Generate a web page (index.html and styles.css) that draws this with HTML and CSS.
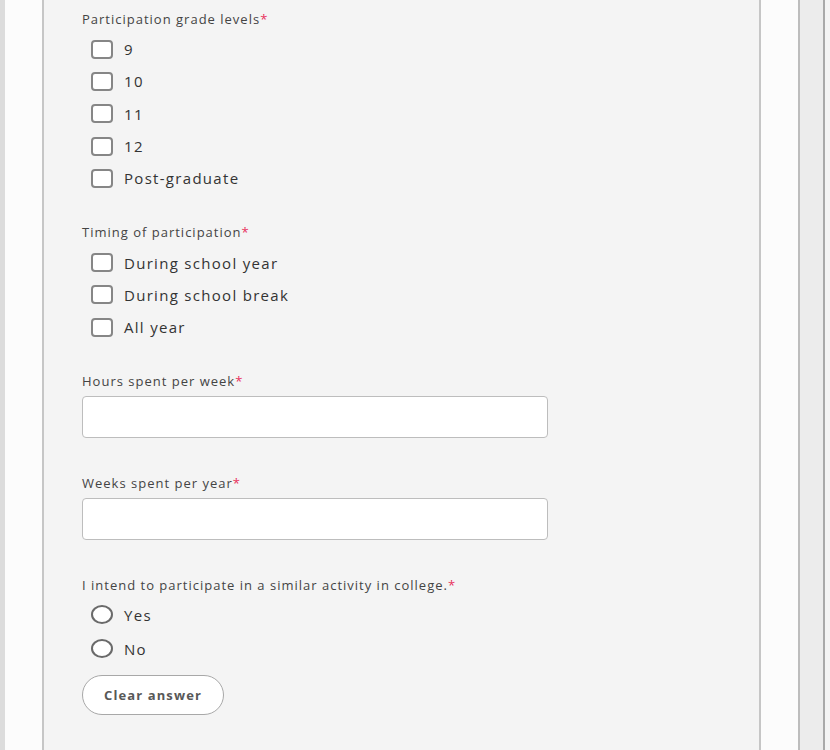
FILE: index.html
```html
<!DOCTYPE html>
<html lang="en">
<head>
  <meta charset="UTF-8" />
  <meta name="viewport" content="width=device-width, initial-scale=1.0"/>
  <title>Activity Details</title>
  <link rel="stylesheet" href="styles.css">
</head>
<body>
  <div class="frame">
    <div class="edge"></div>
    <div class="gutter"></div>

    <div class="panel">
      <fieldset class="group">
        <legend class="field-label">Participation grade levels<span class="req">*</span></legend>
        <label class="option"><input type="checkbox" class="box"><span>9</span></label>
        <label class="option"><input type="checkbox" class="box"><span>10</span></label>
        <label class="option"><input type="checkbox" class="box"><span>11</span></label>
        <label class="option"><input type="checkbox" class="box"><span>12</span></label>
        <label class="option"><input type="checkbox" class="box"><span>Post-graduate</span></label>
      </fieldset>

      <fieldset class="group">
        <legend class="field-label">Timing of participation<span class="req">*</span></legend>
        <label class="option"><input type="checkbox" class="box"><span>During school year</span></label>
        <label class="option"><input type="checkbox" class="box"><span>During school break</span></label>
        <label class="option"><input type="checkbox" class="box"><span>All year</span></label>
      </fieldset>

      <div class="text-field">
        <label class="field-label" for="hours">Hours spent per week<span class="req">*</span></label>
        <input type="text" id="hours" class="text-input">
      </div>

      <div class="text-field">
        <label class="field-label" for="weeks">Weeks spent per year<span class="req">*</span></label>
        <input type="text" id="weeks" class="text-input">
      </div>

      <fieldset class="group radios">
        <legend class="field-label">I intend to participate in a similar activity in college.<span class="req">*</span></legend>
        <label class="option"><input type="radio" name="college" class="round"><span>Yes</span></label>
        <label class="option"><input type="radio" name="college" class="round"><span>No</span></label>
        <button type="button" class="clear-btn">Clear answer</button>
      </fieldset>
    </div>

    <div class="side"></div>
    <div class="track"></div>
    <div class="rest"></div>
  </div>
</body>
</html>
```

FILE: styles.css
```css
body {
  margin: 0;
  padding: 0;
  font-family: "Open Sans", Arial, sans-serif;
  color: #333;
  background-color: #f4f4f4;
  overflow: hidden;
}

.frame {
  display: flex;
  height: 750px;
}

.edge {
  width: 5px;
  background-color: #dcdcdc;
}

.gutter {
  width: 37px;
  background-color: #fcfcfc;
}

.panel {
  width: 719px;
  padding: 10px 0 0 38px;
  box-sizing: border-box;
  background-color: #f4f4f4;
  border-left: 2px solid #c6c6c6;
  border-right: 2px solid #c6c6c6;
}

.side {
  width: 37px;
  background-color: #fcfcfc;
  border-right: 2px solid #bdbdbd;
}

.track {
  width: 23px;
  background-color: #ececec;
  border-right: 2px solid #a9a9a9;
}

.rest {
  flex: 1;
  background-color: #f4f4f4;
}

.group {
  border: none;
  margin: 0 0 29px;
  padding: 0;
}

.field-label {
  display: block;
  padding: 0;
  font-size: 13px;
  line-height: 18px;
  letter-spacing: 1px;
  color: #444;
  margin-bottom: 5px;
}

.req {
  color: #e8305c;
}

.option {
  display: flex;
  align-items: center;
  height: 32.3px;
  padding-left: 9px;
  font-size: 15px;
  letter-spacing: 1.3px;
  color: #333;
}

.box,
.round {
  appearance: none;
  margin: 0 11px 0 0;
  width: 22px;
  height: 19px;
  border: 2px solid #868686;
  background-color: #fff;
  box-sizing: border-box;
}

.box {
  border-radius: 4px;
}

.round {
  border-radius: 50%;
  border-color: #6a6a6a;
}

.radios .field-label {
  margin-bottom: 3px;
}

.radios .option {
  height: 34.3px;
}

.text-field {
  margin-bottom: 36px;
}

.text-field .field-label {
  margin-bottom: 6px;
}

.text-input {
  display: block;
  width: 466px;
  height: 42px;
  box-sizing: border-box;
  border: 1px solid #bdbdbd;
  border-radius: 4px;
  background-color: #fff;
  margin: 0;
}

.clear-btn {
  margin-top: 9px;
  width: 142px;
  height: 40px;
  border: 1px solid #a8a8a8;
  border-radius: 20px;
  background-color: #fff;
  font-family: "Open Sans", Arial, sans-serif;
  font-size: 13px;
  font-weight: bold;
  letter-spacing: 1.1px;
  color: #585858;
  cursor: pointer;
}
```
